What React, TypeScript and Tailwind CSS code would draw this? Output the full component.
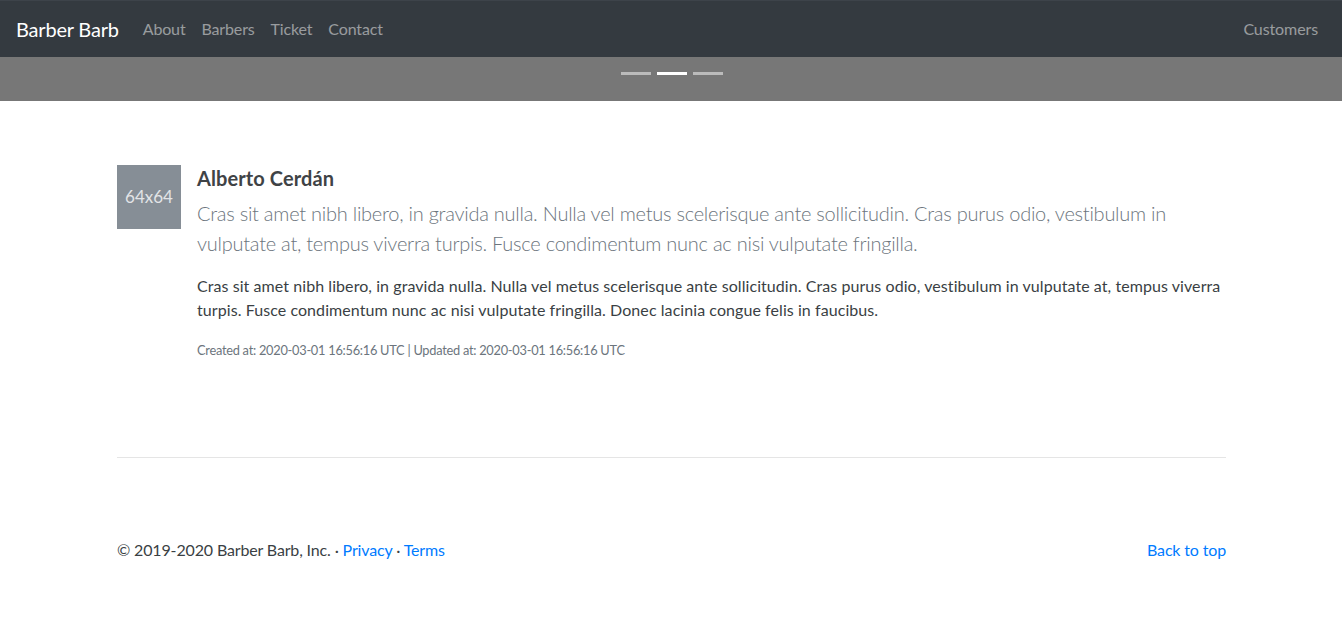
import React from "react";

export default function App() {
  const font = { fontFamily: "Lato, 'Noto Sans', sans-serif" };
  return (
    <div className="min-h-[626px] bg-white text-[#212529]" style={font}>
      <nav className="flex h-[57px] items-center justify-between bg-[#343a40] border-t border-[#3d434a] px-4">
        <div className="flex items-center">
          <span className="mr-4 text-[20px] leading-[30px] tracking-[-0.2px] text-white">Barber Barb</span>
          <div className="flex text-[16px] tracking-[-0.15px] text-white/50">
            <span className="px-2">About</span>
            <span className="px-2">Barbers</span>
            <span className="px-2">Ticket</span>
            <span className="px-2">Contact</span>
          </div>
        </div>
        <span className="px-2 text-[16px] tracking-[-0.1px] text-white/50">Customers</span>
      </nav>
      <div className="flex h-[44px] justify-center bg-[#777777] pt-[15px]">
        <div className="flex gap-[6px] pl-[2px]">
          <span className="h-[3px] w-[30px] bg-white/50" />
          <span className="h-[3px] w-[30px] bg-white" />
          <span className="h-[3px] w-[30px] bg-white/50" />
        </div>
      </div>
      <main className="mx-auto w-[1110px] pl-px pt-[64px]">
        <div className="flex items-start">
          <div className="mr-4 flex h-16 w-16 shrink-0 items-center justify-center bg-[#868e96] text-[17px] text-[#e2e4e6]">
            64x64
          </div>
          <div className="flex-1">
            <h5 className="mb-2 mt-px text-[20px] font-bold leading-[24px] tracking-[0.1px] text-[#3f4346]">Alberto Cerdán</h5>
            <p className="mb-4 text-[20px] font-light leading-[30px] tracking-[-0.25px] text-[#6c757d]">
              Cras sit amet nibh libero, in gravida nulla. Nulla vel metus scelerisque ante sollicitudin. Cras purus odio, vestibulum in vulputate at, tempus viverra turpis. Fusce condimentum nunc ac nisi vulputate fringilla.
            </p>
            <p className="mb-4 text-[16px] leading-[24px] tracking-[0.07px] text-[#3a3f44]">
              Cras sit amet nibh libero, in gravida nulla. Nulla vel metus scelerisque ante sollicitudin. Cras purus odio, vestibulum in vulputate at, tempus viverra turpis. Fusce condimentum nunc ac nisi vulputate fringilla. Donec lacinia congue felis in faucibus.
            </p>
            <p className="mt-[19px] text-[12.8px] leading-[19px] tracking-[-0.26px] text-[#6c757d]">
              Created at: 2020-03-01 16:56:16 UTC | Updated at: 2020-03-01 16:56:16 UTC
            </p>
          </div>
        </div>
        <hr className="mt-[97px] border-t border-black/10" />
        <footer className="flex items-center justify-between pt-[80px] text-[16px] leading-[24px] tracking-[-0.15px]">
          <p className="text-[#3a3f44]">
            © 2019-2020 Barber Barb, Inc. · <span className="text-[#007bff]">Privacy</span> ·{" "}
            <span className="text-[#007bff]">Terms</span>
          </p>
          <span className="text-[#007bff]">Back to top</span>
        </footer>
      </main>
    </div>
  );
}
